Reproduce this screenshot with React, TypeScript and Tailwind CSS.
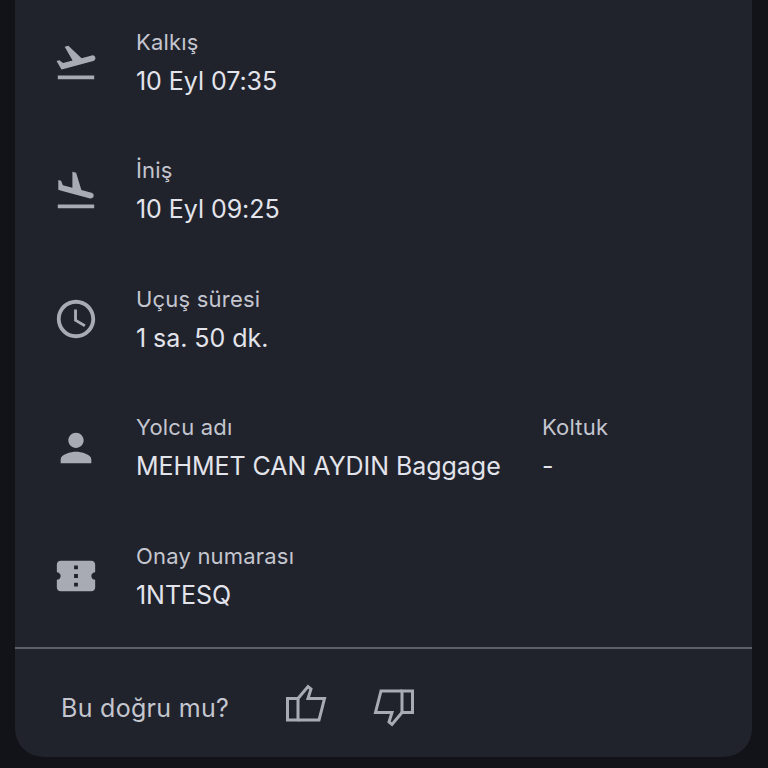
const rows = [
  {
    label: "Kalkış",
    value: "10 Eyl 07:35",
    icon: "M2.5 19h19v2h-19zm19.57-9.36c-.21-.8-1.04-1.28-1.84-1.06L14.92 10l-6.9-6.43-1.93.51 4.14 7.17-4.97 1.33-1.97-1.54-1.45.39 1.82 3.16.77 1.33 1.6-.43 5.31-1.42 4.35-1.16L21 11.49c.81-.23 1.28-1.05 1.07-1.85z",
  },
  {
    label: "İniş",
    value: "10 Eyl 09:25",
    icon: "M2.5 19h19v2h-19zm7.18-5.73l4.35 1.16 5.31 1.42c.8.21 1.62-.26 1.84-1.06.21-.8-.26-1.62-1.06-1.84l-5.31-1.42-2.76-9.02L10.12 2v8.28L5.15 8.95l-.93-2.32-1.45-.39v5.17l1.6.43 5.31 1.43z",
  },
  {
    label: "Uçuş süresi",
    value: "1 sa. 50 dk.",
    icon: "M11.99 2C6.47 2 2 6.48 2 12s4.47 10 9.99 10C17.52 22 22 17.52 22 12S17.52 2 11.99 2zM12 20c-4.42 0-8-3.58-8-8s3.58-8 8-8 8 3.58 8 8-3.58 8-8 8zM12.5 7H11v6l5.25 3.15.75-1.23-4.5-2.67z",
  },
  {
    label: "Yolcu adı",
    value: "MEHMET CAN AYDIN Baggage",
    icon: "M12 12c2.21 0 4-1.79 4-4s-1.79-4-4-4-4 1.79-4 4 1.79 4 4 4zm0 2c-2.67 0-8 1.34-8 4v2h16v-2c0-2.66-5.33-4-8-4z",
    extra: { label: "Koltuk", value: "-" },
  },
  {
    label: "Onay numarası",
    value: "1NTESQ",
    icon: "M22 10V6c0-1.11-.9-2-2-2H4c-1.1 0-1.99.89-1.99 2v4c1.1 0 1.99.9 1.99 2s-.89 2-2 2v4c0 1.1.9 2 2 2h16c1.1 0 2-.9 2-2v-4c-1.1 0-2-.9-2-2s.9-2 2-2zm-9 7.5h-2v-2h2v2zm0-4.5h-2v-2h2v2zm0-4.5h-2v-2h2v2z",
  },
];

function Field({ label, value }: { label: string; value: string }) {
  return (
    <div className="flex flex-col">
      <span className="mb-[2px] text-[22px] leading-[36px] tracking-[0.2px] text-[#c4c6cf] whitespace-nowrap">{label}</span>
      <span className="text-[25px] leading-[39px] tracking-[-0.05px] text-[#e3e4eb] whitespace-nowrap">{value}</span>
    </div>
  );
}

function Thumb({ className }: { className?: string }) {
  return (
    <svg className={className} width="42" height="38" viewBox="0 0 42 38" fill="none" stroke="#a9abb4" strokeWidth="3">
      <path d="M2.5 14.5H13V36H2.5z" />
      <path d="M13 14.5L23 2.5l3 2.5-3 9.5h16.5L34 36H13" />
    </svg>
  );
}

export default function App() {
  return (
    <div className="h-[768px] overflow-hidden bg-[#121318] px-[15px] font-['Inter',sans-serif]">
      <div className="w-[737px] -mt-[2px] rounded-b-[28px] bg-[#20222c]">
        {rows.map((row) => (
          <div key={row.label} className="flex h-[128.5px] items-center">
            <svg className="ml-[38px] shrink-0" width="46" height="46" viewBox="0 0 24 24" fill="#a9abb4">
              <path d={row.icon} fillRule="evenodd" />
            </svg>
            <div className="ml-[37px] w-[406px]">
              <Field label={row.label} value={row.value} />
            </div>
            {row.extra && <Field label={row.extra.label} value={row.extra.value} />}
          </div>
        ))}
        <div className="mt-[6px] h-[2px] bg-[#5d5f68]" />
        <div className="flex h-[108.5px] items-center pl-[46px] pt-[12px]">
          <span className="text-[25px] tracking-[0.3px] text-[#c4c6cf]">Bu doğru mu?</span>
          <Thumb className="ml-[56px] -mt-[12px]" />
          <Thumb className="ml-[46px] -mt-[2px] rotate-180" />
        </div>
      </div>
    </div>
  );
}
